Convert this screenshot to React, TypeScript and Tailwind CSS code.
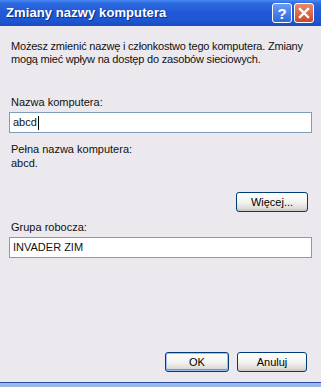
import React from 'react';

const font = { fontFamily: '"Liberation Sans", Arial, sans-serif' };

function XpButton({ label, primary, className }: { label: string; primary?: boolean; className?: string }) {
  return (
    <button
      className={`h-[20px] rounded-[3px] border border-[#003c74] bg-gradient-to-b from-white via-[#f3f3ef] to-[#d6d3ce] text-[11px] text-black ${
        primary ? 'shadow-[inset_0_0_0_1px_#9fc1f3,inset_0_-1px_0_1px_#6a93dc]' : 'shadow-[inset_0_-2px_0_#d0cdc6]'
      } ${className ?? ''}`}
    >
      {label}
    </button>
  );
}

export default function App() {
  return (
    <div className="w-[321px] h-[387px] flex flex-col overflow-hidden bg-[#ebe9ed]" style={font}>
      {/* title bar */}
      <div className="h-[26px] flex items-center pl-[6px] pr-[7px] bg-[linear-gradient(180deg,#4a8af4_0%,#2d6ae0_12%,#2159d6_45%,#1d55d2_80%,#1a4cc0_100%)]">
        <span className="flex-1 text-[13px] font-bold text-white tracking-[0.1px] [text-shadow:1px_1px_0_#0f2f80]">
          Zmiany nazwy komputera
        </span>
        <div className="flex gap-[2px]">
          <div className="w-[20px] h-[20px] rounded-[3px] border border-white bg-gradient-to-b from-[#6a9af4] to-[#3068da] flex items-center justify-center text-white text-[15px] font-bold leading-none">
            ?
          </div>
          <div className="w-[20px] h-[20px] rounded-[3px] border border-white bg-gradient-to-b from-[#e88a6c] to-[#c9472a] flex items-center justify-center">
            <svg width="12" height="12" viewBox="0 0 12 12">
              <path d="M2 2 L10 10 M10 2 L2 10" stroke="white" strokeWidth="2.4" strokeLinecap="square" />
            </svg>
          </div>
        </div>
      </div>

      {/* body */}
      <div className="flex-1 flex flex-col px-[9px] pt-[14px] text-[11px] leading-[13px] text-[#111]">
        <p className="pl-[2px] whitespace-nowrap tracking-[-0.2px]">
          Możesz zmienić nazwę i członkostwo tego komputera. Zmiany
          <br />
          mogą mieć wpływ na dostęp do zasobów sieciowych.
        </p>

        <div className="mt-[30px] pl-[2px]">Nazwa komputera:</div>
        <div className="mt-[3px] h-[21px] border border-[#7f9db9] bg-white flex items-center pl-[3px]">
          abcd
          <span className="inline-block w-px h-[14px] bg-black ml-[1px]" />
        </div>

        <div className="mt-[10px] pl-[2px]">Pełna nazwa komputera:</div>
        <div className="mt-[1px] pl-[2px]">abcd.</div>

        <div className="mt-[22px] flex justify-end pr-[4px]">
          <XpButton label="Więcej..." className="w-[72px]" />
        </div>

        <div className="mt-[9px] pl-[2px]">Grupa robocza:</div>
        <div className="mt-[3px] h-[21px] border border-[#7f9db9] bg-white flex items-center pl-[3px]">
          INVADER ZIM
        </div>

        <div className="mt-[94px] flex justify-end gap-[8px] pr-[5px]">
          <XpButton label="OK" primary className="w-[64px]" />
          <XpButton label="Anuluj" className="w-[70px]" />
        </div>
      </div>

      {/* bottom frame */}
      <div className="h-[1px] bg-[#2a4a9c]" />
      <div className="h-[4px] bg-[#9ab8ea]" />
    </div>
  );
}
